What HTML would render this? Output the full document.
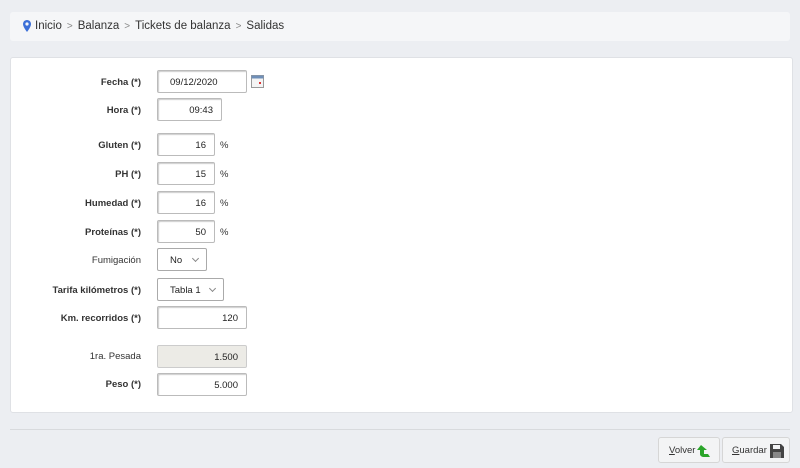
<!DOCTYPE html>
<html><head><style>
body{margin:0;width:800px;height:468px;background:#eceef2;font-family:"Liberation Sans",sans-serif;position:relative;overflow:hidden}
.bc{position:absolute;left:10px;top:12px;width:780px;height:29px;background:#f5f6f8;border-radius:3px;font-size:11.5px;color:#333;line-height:29px}
.bc span.s{color:#888;margin:0 5px;font-size:10px}
.panel{position:absolute;left:10px;top:57px;width:783px;height:356px;background:#fff;border:1px solid #dfe1e5;border-radius:3px;box-sizing:border-box}
.l{position:absolute;right:659px;font-size:9.5px;color:#333;text-align:right;white-space:nowrap}
.b{font-weight:bold}
.i{position:absolute;left:157px;height:23px;border:1px solid #bbb;border-radius:2px;box-sizing:border-box;background:#fff;font-size:9.5px;line-height:23px;text-align:right;padding-right:8px;color:#222;box-shadow:inset 1px 1px 1px #ccc}
.sel{box-shadow:none;border-color:#aaa;text-align:left;padding-left:12px}
.sel:after{content:"";position:absolute;right:8px;top:7px;width:4px;height:4px;border-right:1px solid #888;border-bottom:1px solid #888;transform:rotate(45deg)}
.p{position:absolute;left:220px;font-size:9.5px;color:#333}
.line{position:absolute;left:10px;top:429px;width:780px;height:1px;background:#d8dadd}
.btn{position:absolute;top:437px;height:26px;border:1px solid #d6d6d6;border-radius:3px;background:#f3f4f5;font-size:9.5px;line-height:26px;color:#333;box-sizing:border-box;padding-left:10px}
</style></head><body>
<div class="bc"><svg style="position:absolute;left:13px;top:8px" width="8" height="12" viewBox="0 0 8 12"><path d="M4 0C1.8 0 0 1.8 0 4c0 3 4 8 4 8s4-5 4-8C8 1.8 6.2 0 4 0z" fill="#3b6fd8"/><circle cx="4" cy="4" r="1.6" fill="#f5f6f8"/></svg><span style="margin-left:25px">Inicio</span><span class="s">&gt;</span>Balanza<span class="s">&gt;</span>Tickets de balanza<span class="s">&gt;</span>Salidas</div>
<div class="panel"></div>
<div class="l b" style="top:77px">Fecha (*)</div><div class="i" style="top:70px;width:90px;text-align:left;padding-left:12px">09/12/2020</div>
<svg style="position:absolute;left:251px;top:75px" width="13" height="13" viewBox="0 0 13 13"><rect x=".5" y=".5" width="12" height="12" fill="#f4f4f4" stroke="#999"/><rect x=".5" y=".5" width="12" height="3" fill="#6f8fb8"/><rect x="8" y="7" width="2" height="2" fill="#d33"/></svg>
<div class="l b" style="top:105px">Hora (*)</div><div class="i" style="top:98px;width:65px">09:43</div>
<div class="l b" style="top:140px">Gluten (*)</div><div class="i" style="top:133px;width:58px">16</div><div class="p" style="top:140px">%</div>
<div class="l b" style="top:169px">PH (*)</div><div class="i" style="top:162px;width:58px">15</div><div class="p" style="top:169px">%</div>
<div class="l b" style="top:198px">Humedad (*)</div><div class="i" style="top:191px;width:58px">16</div><div class="p" style="top:198px">%</div>
<div class="l b" style="top:227px">Proteínas (*)</div><div class="i" style="top:220px;width:58px">50</div><div class="p" style="top:227px">%</div>
<div class="l" style="top:255px">Fumigación</div><div class="i sel" style="top:248px;width:50px">No</div>
<div class="l b" style="top:285px">Tarifa kilómetros (*)</div><div class="i sel" style="top:278px;width:67px">Tabla 1</div>
<div class="l b" style="top:313px">Km. recorridos (*)</div><div class="i" style="top:306px;width:90px">120</div>
<div class="l" style="top:351px">1ra. Pesada</div><div class="i" style="top:345px;width:90px;background:#ecebe6;border-color:#ccc;box-shadow:none">1.500</div>
<div class="l b" style="top:379px">Peso (*)</div><div class="i" style="top:373px;width:90px">5.000</div>
<div class="line"></div>
<div class="btn" style="left:658px;width:62px"><u>V</u>olver<svg style="position:absolute;left:38px;top:6px" width="14" height="14" viewBox="0 0 14 14"><path d="M4 1L0 6h3v4c0 2 2 3 4 3h6l-2-3H7V6h3z" fill="#2aa52a"/></svg></div>
<div class="btn" style="left:722px;width:68px;padding-left:9px"><u>G</u>uardar<svg style="position:absolute;left:47px;top:6px" width="14" height="14" viewBox="0 0 14 14"><path d="M0 0h11l3 3v11H0z" fill="#444"/><rect x="3" y="1" width="7" height="4" fill="#f3f4f5"/><rect x="3" y="8" width="8" height="6" fill="#888"/></svg></div>
</body></html>
